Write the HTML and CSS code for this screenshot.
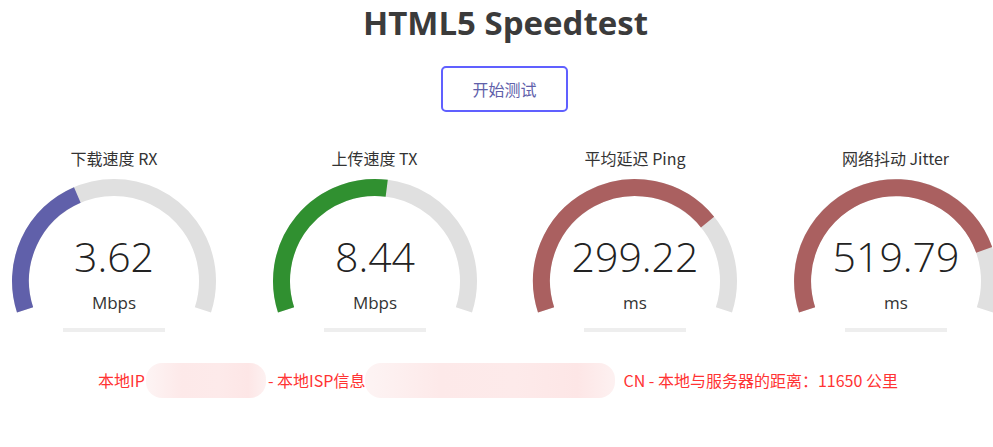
FILE: index.html
```html
<!DOCTYPE html>
<html>
<head>
  <meta charset="utf-8">
  <link rel="stylesheet" href="styles.css">
</head>
<body>
  <h1 class="title">HTML5 Speedtest</h1>
  <div class="controls">
    <button class="start-btn">开始测试</button>
  </div>

  <div class="gauges">
    <div class="test">
      <div class="test-name">下载速度 RX</div>
      <svg class="meter" width="206" height="170" viewBox="0 0 206 170">
        <path class="meter-bk" d="M14.08 138.89 A93.5 93.5 0 1 1 191.92 138.89"/>
        <path class="meter-dl" d="M14.08 138.89 A93.5 93.5 0 0 1 66.32 24.0"/>
        <text class="meter-value" x="103" y="101">3.62</text>
        <text class="meter-unit" x="103" y="138">Mbps</text>
        <rect class="meter-prog" x="52" y="157" width="102" height="4"/>
      </svg>
    </div>
    <div class="test">
      <div class="test-name">上传速度 TX</div>
      <svg class="meter" width="206" height="170" viewBox="0 0 206 170">
        <path class="meter-bk" d="M14.08 138.89 A93.5 93.5 0 1 1 191.92 138.89"/>
        <path class="meter-ul" d="M14.08 138.89 A93.5 93.5 0 0 1 114.72 17.24"/>
        <text class="meter-value" x="103" y="101">8.44</text>
        <text class="meter-unit" x="103" y="138">Mbps</text>
        <rect class="meter-prog" x="52" y="157" width="102" height="4"/>
      </svg>
    </div>
    <div class="test">
      <div class="test-name">平均延迟 Ping</div>
      <svg class="meter" width="206" height="170" viewBox="0 0 206 170">
        <path class="meter-bk" d="M14.08 138.89 A93.5 93.5 0 1 1 191.92 138.89"/>
        <path class="meter-ms" d="M14.08 138.89 A93.5 93.5 0 0 1 175.56 51.03"/>
        <text class="meter-value" x="103" y="101">299.22</text>
        <text class="meter-unit" x="103" y="138">ms</text>
        <rect class="meter-prog" x="52" y="157" width="102" height="4"/>
      </svg>
    </div>
    <div class="test">
      <div class="test-name">网络抖动 Jitter</div>
      <svg class="meter" width="206" height="170" viewBox="0 0 206 170">
        <path class="meter-bk" d="M14.08 138.89 A93.5 93.5 0 1 1 191.92 138.89"/>
        <path class="meter-ms" d="M14.08 138.89 A93.5 93.5 0 0 1 191.19 78.94"/>
        <text class="meter-value" x="103" y="101">519.79</text>
        <text class="meter-unit" x="103" y="138">ms</text>
        <rect class="meter-prog" x="52" y="157" width="102" height="4"/>
      </svg>
    </div>
  </div>

  <div class="ip-area">
    <span>本地IP</span>
    <span class="blur blur-ip"></span>
    <span>- 本地ISP信息</span>
    <span class="blur blur-isp"></span>
    <span>CN - 本地与服务器的距离：11650 公里</span>
  </div>
</body>
</html>
```

FILE: styles.css
```css
html, body {
  overflow: hidden;
}
body {
  margin: 0;
  background: #fff;
  color: #333;
  font-family: "Open Sans", "Noto Sans CJK SC", sans-serif;
  text-align: center;
}
.title {
  margin: 0;
  padding-left: 18px;
  font-size: 33px;
  line-height: 45px;
  font-weight: 700;
  color: #3b3b3b;
}
.controls {
  margin-top: 21px;
  display: flex;
  justify-content: center;
}
.start-btn {
  width: 127px;
  height: 46px;
  margin-left: 16px;
  border: 2px solid #6060ff;
  border-radius: 5px;
  background: transparent;
  color: #6060aa;
  font-family: "Noto Sans CJK SC", sans-serif;
  font-size: 16px;
  cursor: pointer;
}
.gauges {
  display: flex;
  gap: 54.5px;
  padding-left: 11px;
  margin-top: 33px;
}
.test {
  flex: 0 0 206px;
}
.test-name {
  font-size: 16px;
  line-height: 26px;
  color: #333;
  font-family: "Noto Sans CJK SC", sans-serif;
}
.meter {
  display: block;
}
.meter path {
  fill: none;
  stroke-width: 17;
}
.meter-bk {
  stroke: #e0e0e0;
}
.meter-dl {
  stroke: #6060aa;
}
.meter-ul {
  stroke: #309030;
}
.meter-ms {
  stroke: #aa6060;
}
.meter-value {
  font-size: 41px;
  font-weight: 350;
  fill: #222;
  text-anchor: middle;
}
.meter-unit {
  font-size: 17px;
  fill: #333;
  text-anchor: middle;
}
.meter-prog {
  fill: #eeeeee;
}
.ip-area {
  display: flex;
  justify-content: center;
  align-items: center;
  height: 36px;
  margin-top: 21px;
  padding-left: 3px;
  color: #ff3333;
  font-size: 16px;
  font-family: "Noto Sans CJK SC", sans-serif;
}
.ip-area span {
  white-space: pre;
}
.blur {
  display: inline-block;
  height: 35px;
  border-radius: 16px;
  background: linear-gradient(90deg, #fdf4f4 0%, #fde9e9 30%, #fdeaea 60%, #fde6e6 85%, #fdf1f1 100%);
}
.blur-ip {
  width: 120px;
  margin: 0 2px 0 1px;
}
.blur-isp {
  width: 250px;
  margin: 0 8px 0 0;
}
```
